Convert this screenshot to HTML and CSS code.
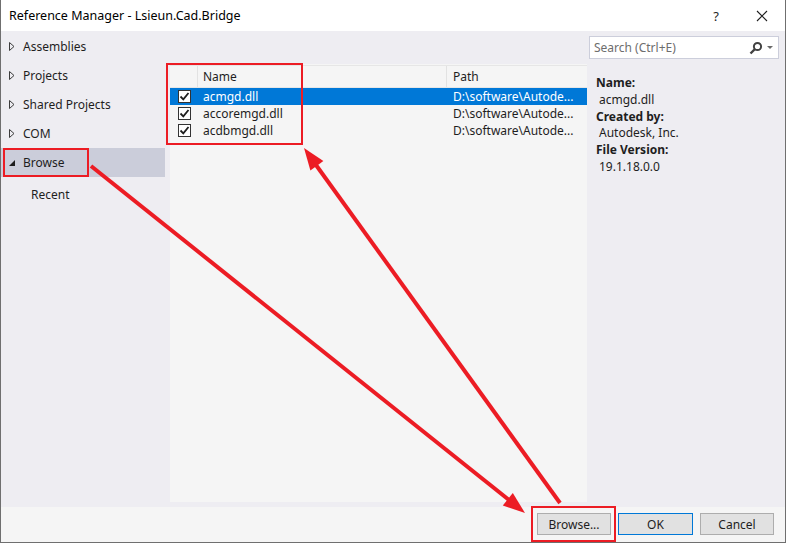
FILE: index.html
```html
<!DOCTYPE html>
<html>
<head>
<meta charset="utf-8">
<link rel="stylesheet" href="styles.css">
</head>
<body>
<div class="window">
  <div class="titlebar">
    <div class="title">Reference Manager - Lsieun.Cad.Bridge</div>
    <div class="tb-buttons">
      <span class="help">?</span>
      <svg class="close" width="12" height="12" viewBox="0 0 12 12"><path d="M1 1L11 11M11 1L1 11" stroke="#1e1e1e" stroke-width="1.1" fill="none"/></svg>
    </div>
  </div>
  <div class="main">
    <div class="nav">
      <div class="nav-item"><svg class="tri" width="6" height="9" viewBox="0 0 6 9"><path d="M0.5 0.5L5 4.5L0.5 8.5Z" fill="none" stroke="#3c3c3c" stroke-width="1"/></svg><span>Assemblies</span></div>
      <div class="nav-item"><svg class="tri" width="6" height="9" viewBox="0 0 6 9"><path d="M0.5 0.5L5 4.5L0.5 8.5Z" fill="none" stroke="#3c3c3c" stroke-width="1"/></svg><span>Projects</span></div>
      <div class="nav-item"><svg class="tri" width="6" height="9" viewBox="0 0 6 9"><path d="M0.5 0.5L5 4.5L0.5 8.5Z" fill="none" stroke="#3c3c3c" stroke-width="1"/></svg><span>Shared Projects</span></div>
      <div class="nav-item"><svg class="tri" width="6" height="9" viewBox="0 0 6 9"><path d="M0.5 0.5L5 4.5L0.5 8.5Z" fill="none" stroke="#3c3c3c" stroke-width="1"/></svg><span>COM</span></div>
      <div class="nav-item active"><svg class="tri" width="6" height="9" viewBox="0 0 6 9"><path d="M6 2L6 8L0 8Z" fill="#1e1e1e"/></svg><span>Browse</span></div>
      <div class="nav-item sub"><span>Recent</span></div>
    </div>
    <div class="list">
      <div class="list-head">
        <div class="col-check"></div>
        <div class="col-name">Name</div>
        <div class="col-path">Path</div>
      </div>
      <div class="row selected">
        <div class="col-check"><span class="cb"><svg width="11" height="11" viewBox="0 0 11 11"><path d="M1.5 5.5L4.3 8.3L9.5 2" fill="none" stroke="#1e1e1e" stroke-width="1.8"/></svg></span></div>
        <div class="col-name">acmgd.dll</div>
        <div class="col-path">D:\software\Autode...</div>
      </div>
      <div class="row">
        <div class="col-check"><span class="cb"><svg width="11" height="11" viewBox="0 0 11 11"><path d="M1.5 5.5L4.3 8.3L9.5 2" fill="none" stroke="#1e1e1e" stroke-width="1.8"/></svg></span></div>
        <div class="col-name">accoremgd.dll</div>
        <div class="col-path">D:\software\Autode...</div>
      </div>
      <div class="row">
        <div class="col-check"><span class="cb"><svg width="11" height="11" viewBox="0 0 11 11"><path d="M1.5 5.5L4.3 8.3L9.5 2" fill="none" stroke="#1e1e1e" stroke-width="1.8"/></svg></span></div>
        <div class="col-name">acdbmgd.dll</div>
        <div class="col-path">D:\software\Autode...</div>
      </div>
    </div>
    <div class="side">
      <div class="search">
        <span class="placeholder">Search (Ctrl+E)</span>
        <svg class="mag" width="14" height="14" viewBox="0 0 14 14"><circle cx="8.5" cy="5.5" r="3.6" fill="none" stroke="#424242" stroke-width="2"/><path d="M6 8L1.5 12.5" stroke="#424242" stroke-width="2.4"/></svg>
        <svg class="dd" width="6" height="4" viewBox="0 0 6 4"><path d="M0 0H6L3 3Z" fill="#6a6a6a"/></svg>
      </div>
      <div class="details">
        <div class="lbl">Name:</div>
        <div class="val">acmgd.dll</div>
        <div class="lbl">Created by:</div>
        <div class="val">Autodesk, Inc.</div>
        <div class="lbl">File Version:</div>
        <div class="val">19.1.18.0.0</div>
      </div>
    </div>
  </div>
  <div class="footer">
    <button class="btn">Browse...</button>
    <button class="btn default">OK</button>
    <button class="btn">Cancel</button>
  </div>

  <div class="mark mark-browse"></div>
  <div class="mark mark-list"></div>
  <div class="mark mark-button"></div>
  <svg class="arrows" width="786" height="543" viewBox="0 0 786 543">
    <line x1="91" y1="166" x2="509" y2="500" stroke="#ec1c24" stroke-width="4"/>
    <polygon points="525,513 502.8,505.5 512.8,493" fill="#ec1c24"/>
    <line x1="560" y1="503" x2="316" y2="165" stroke="#ec1c24" stroke-width="4"/>
    <polygon points="304,148 323.4,161.1 310.4,170.5" fill="#ec1c24"/>
  </svg>
</div>
</body>
</html>
```

FILE: styles.css
```css
* { box-sizing: border-box; }
html, body { margin: 0; padding: 0; }
body {
  width: 786px;
  height: 543px;
  overflow: hidden;
  font-family: "Noto Sans", "Open Sans", sans-serif;
  font-size: 12px;
  color: #1e1e1e;
  background: #ffffff;
}
.window {
  position: relative;
  width: 786px;
  height: 543px;
  border: 1px solid #6f6f6f;
  border-top: none;
  display: flex;
  flex-direction: column;
  background: #eeedf2;
}
.titlebar {
  height: 31px;
  flex: none;
  background: #ffffff;
  display: flex;
  align-items: center;
  justify-content: space-between;
  padding-left: 8px;
}
.title { font-size: 12.5px; color: #000; }
.tb-buttons { display: flex; align-items: center; height: 100%; }
.help { font-size: 13px; color: #1e1e1e; margin-right: 37px; }
.close { margin-right: 17px; }
.main {
  flex: 1;
  display: flex;
  min-height: 0;
}
.nav {
  width: 164px;
  flex: none;
  padding-top: 1px;
}
.nav-item {
  height: 29px;
  display: flex;
  align-items: center;
  padding-left: 8px;
  color: #1e1e1e;
}
.nav-item .tri { margin-right: 8px; flex: none; }
.nav-item.active { background: #cbcdda; }
.nav-item.sub { padding-left: 30px; margin-top: 3px; }
.list {
  width: 417px;
  flex: none;
  margin: 33px 0 5px 5px;
  background: #f5f5f5;
}
.list-head {
  display: flex;
  height: 23px;
  border-top: 1px solid #e6e6e6;
  border-bottom: 1px solid #e6e6e6;
  margin-top: 1px;
}
.list-head > div {
  display: flex;
  align-items: center;
  border-right: 1px solid #e2e2e2;
}
.col-check { width: 28px; flex: none; }
.col-name { width: 249px; flex: none; padding-left: 5px; }
.col-path { flex: 1; padding-left: 6px; min-width: 0; white-space: nowrap; }
.list-head .col-path { border-right: none; }
.row {
  display: flex;
  height: 17px;
  align-items: center;
}
.row .col-check { padding-left: 8px; display: flex; align-items: center; }
.row.selected { background: #0078d7; color: #ffffff; }
.cb {
  width: 13px;
  height: 13px;
  border: 1px solid #333333;
  background: #ffffff;
  display: flex;
  align-items: center;
  justify-content: center;
}
.side {
  flex: 1;
  padding: 5px 0 0 2px;
}
.search {
  width: 190px;
  height: 23px;
  background: #ffffff;
  border: 1px solid #cccedb;
  display: flex;
  align-items: center;
  padding-left: 4px;
}
.placeholder { color: #6d6d6d; flex: 1; }
.mag { margin-right: 4px; }
.dd { margin-right: 5px; }
.details {
  padding: 16px 0 0 7px;
  line-height: 16.8px;
}
.lbl { font-weight: bold; }
.val { padding-left: 3px; }
.footer {
  height: 35px;
  flex: none;
  background: #f5f5f5;
  display: flex;
  justify-content: flex-end;
  align-items: flex-start;
  padding: 6px 11px 0 0;
  gap: 7px;
}
.btn {
  width: 74px;
  height: 22px;
  font-family: "Noto Sans", "Open Sans", sans-serif;
  font-size: 12px;
  color: #1e1e1e;
  background: #e1e1e1;
  border: 1px solid #adadad;
  padding: 0;
}
.btn.default { border-color: #0078d7; width: 75px; }
.mark {
  position: absolute;
  border: 2px solid #ec1c24;
}
.mark-browse { left: 2px; top: 148px; width: 86px; height: 29px; }
.mark-list { left: 165px; top: 63px; width: 137px; height: 82px; }
.mark-button { left: 530px; top: 506px; width: 85px; height: 36px; }
.arrows { position: absolute; left: -1px; top: 0; pointer-events: none; }
```
